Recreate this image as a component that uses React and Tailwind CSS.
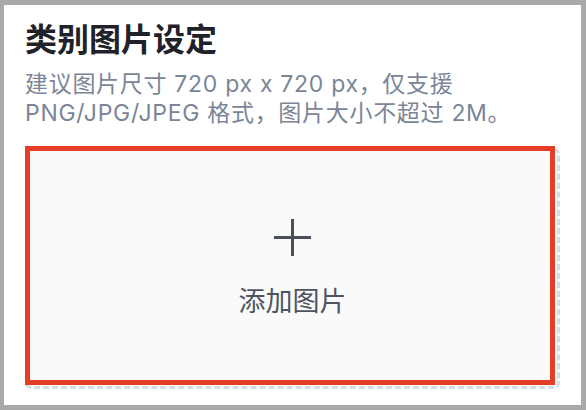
export default function App() {
	return (
		<div className="w-[586px] h-[410px] bg-[#a9a9a9] pt-[5px] pl-[4px] pr-[5px] pb-[5px]">
			<div
				className="h-full bg-white px-[21px] pt-[15px]"
				style={{ fontFamily: 'Inter, "Noto Sans CJK SC", sans-serif' }}
			>
				<h1 className="text-[32px] leading-[40px] font-bold text-[#1f2329]">类别图片设定</h1>
				<p className="mt-[10px] text-[23px] leading-[29px] tracking-[0.7px] text-[#7b8597]">
					建议图片尺寸 720 px x 720 px，仅支援
					<br />
					PNG/JPG/JPEG 格式，图片大小不超过 2M。
				</p>
				<div className="relative mt-[20px] h-[241px] rounded-md border-[3px] border-dashed border-[#d6dce3] bg-[#fafafa] flex flex-col items-center justify-center">
					<svg width="37" height="37" viewBox="0 0 37 37">
						<path d="M18.5 0v37M0 18.5h37" stroke="#4a4f5c" strokeWidth="3" />
					</svg>
					<span className="mt-[30px] text-[27px] leading-[32px] text-[#4e5461]">添加图片</span>
					<div className="absolute -top-[5px] -left-[3px] right-[2px] bottom-[1px] border-[5px] border-[#e63e26] pointer-events-none" />
				</div>
			</div>
		</div>
	);
}
